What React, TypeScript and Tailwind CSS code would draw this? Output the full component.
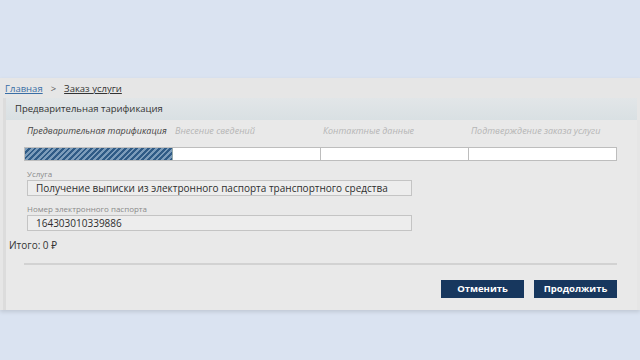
const steps = [
  { label: 'Предварительная тарификация', active: true },
  { label: 'Внесение сведений', active: false },
  { label: 'Контактные данные', active: false },
  { label: 'Подтверждение заказа услуги', active: false },
];

const Field = ({ label, value }: { label: string; value: string }) => (
  <div className="flex flex-col">
    <span className="text-[8px] leading-[10px] text-[#8a8a8a]">{label}</span>
    <div className="mt-[1px] h-[16px] w-[385px] whitespace-nowrap border border-[#c4c4c4] bg-[#ededed] px-[8px] text-[10px] leading-[14px] text-[#2e2e2e]">
      {value}
    </div>
  </div>
);

export default function App() {
  return (
    <div
      className="flex h-[360px] w-[640px] flex-col bg-[#dae3f1]"
      style={{ fontFamily: '"Open Sans", "Noto Sans", sans-serif' }}
    >
      <div className="mt-[78px] flex h-[232px] flex-col bg-[#e6e6e6] shadow-[0_2px_4px_rgba(0,0,0,0.12)]">
        <div className="flex h-[20px] items-center gap-[8px] px-[5px] pt-[2px] text-[9.5px]">
          <span className="text-[#3a6ea5] underline">Главная</span>
          <span className="text-[#555]">&gt;</span>
          <span className="text-[#333] underline">Заказ услуги</span>
        </div>
        <div className="mx-[3px] flex flex-1 flex-col border-l-[3px] border-[#dcdcdc] bg-[#e9e9e9]">
          <div className="flex h-[22px] items-center bg-gradient-to-b from-[#e2e6e8] to-[#d9e0e3] px-[9px] text-[9.5px] text-[#333]">
            Предварительная тарификация
          </div>
          <div className="flex flex-col px-[18px]">
            <div className="mt-[7px] flex h-[13px] items-end">
              {steps.map((s, i) => (
                <div key={i} className="w-[148px] whitespace-nowrap pl-[3px]">
                  <span
                    className={`text-[9px] italic leading-[11px] ${s.active ? 'text-[#444]' : 'text-[#b5b5b5]'}`}
                  >
                    {s.label}
                  </span>
                </div>
              ))}
            </div>
            <div className="mt-[7px] flex h-[14px] w-[593px] border border-[#bdbdbd] bg-white">
              <div
                className="h-full w-[148px] border-r border-[#9aa]"
                style={{
                  backgroundImage:
                    'repeating-linear-gradient(-45deg, #2f5b86 0 2px, #7c9cba 2px 4px)',
                }}
              />
              <div className="h-full w-[148px] border-r border-[#bdbdbd]" />
              <div className="h-full w-[148px] border-r border-[#bdbdbd]" />
              <div className="h-full flex-1" />
            </div>
            <div className="mt-[8px] flex flex-col gap-[8px] pl-[3px]">
              <Field label="Услуга" value="Получение выписки из электронного паспорта транспортного средства" />
              <Field label="Номер электронного паспорта" value="164303010339886" />
            </div>
          </div>
          <div className="mt-[7px] pl-[3px] text-[10px] text-[#333]">Итого: 0 ₽</div>
          <div className="mx-[18px] mt-[10px] h-[2px] w-[593px] bg-[#d2d2d2]" />
          <div className="mt-[15px] flex justify-end gap-[10px] pr-[20px]">
            <button className="h-[18px] w-[83px] bg-[#17375e] text-[9.5px] font-bold text-white">
              Отменить
            </button>
            <button className="h-[18px] w-[83px] bg-[#17375e] text-[9.5px] font-bold text-white">
              Продолжить
            </button>
          </div>
        </div>
      </div>
    </div>
  );
}
